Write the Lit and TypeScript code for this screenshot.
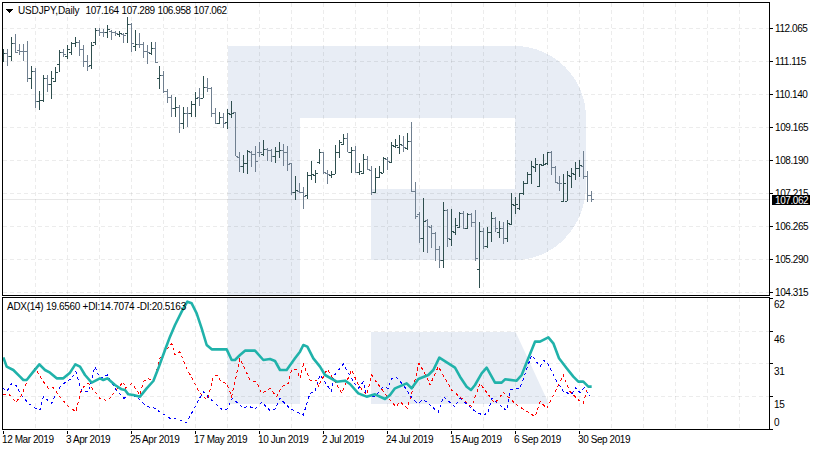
import { LitElement, html, svg, css } from "lit";
import { customElement } from "lit/decorators.js";

type Bar = [number, number, number, number];
// high, low, open, close, in page pixels; one bar every 4px from x = 3
const BARS: Bar[] = [
[49,62,54,53],[49,66,53,56],[37,61,56,43],[34,53,43,52],[44,55,50,51],[44,61,51,51],[41,82,51,78],[66,89,78,71],[68,108,71,101],[91,110,101,100],
[75,102,100,78],[75,92,78,84],[71,99,84,78],[67,82,81,72],[50,72,64,52],[49,57,52,54],[45,59,56,49],[42,55,52,43],[37,47,43,42],[40,56,42,49],
[45,67,49,61],[55,71,61,66],[42,69,65,45],[28,45,42,30],[28,36,30,32],[29,37,32,32],[25,38,32,29],[30,40,31,32],[31,36,32,33],[31,37,34,33],
[33,43,34,35],[17,43,33,24],[23,52,24,43],[30,51,46,44],[33,48,44,44],[42,58,44,51],[45,64,51,52],[42,55,53,48],[42,63,48,62],[66,89,78,75],
[71,93,75,91],[89,103,91,97],[95,117,97,108],[97,117,108,107],[105,133,107,123],[107,129,123,113],[107,127,113,113],[101,117,113,104],[92,117,104,98],[88,106,97,98],
[76,98,98,87],[78,92,87,88],[87,117,88,113],[108,124,113,123],[112,124,123,117],[113,128,117,123],[109,129,122,113],[101,118,114,113],[112,156,112,156],[152,172,157,166],
[155,173,166,163],[150,174,163,151],[151,167,152,154],[146,172,154,161],[142,157,152,152],[140,156,154,149],[148,161,149,150],[149,162,150,156],[147,163,156,151],[142,158,151,150],
[144,166,150,152],[146,171,152,164],[163,195,163,192],[176,200,192,190],[183,193,191,192],[187,209,192,196],[172,199,195,175],[161,180,175,174],[170,183,175,173],[149,164,162,152],
[152,174,152,172],[170,184,173,174],[171,178,175,174],[145,174,174,152],[140,158,152,142],[134,145,144,138],[133,152,138,152],[147,173,152,150],[146,173,150,172],[163,175,172,171],
[154,174,173,159],[156,170,159,169],[166,195,170,192],[168,193,192,177],[166,178,177,172],[157,173,173,158],[157,170,159,161],[142,163,162,145],[139,148,146,145],[135,154,147,144],
[136,152,145,147],[133,150,148,141],[122,192,141,191],[182,219,191,216],[212,243,214,238],[198,252,238,221],[219,253,220,226],[225,248,227,233],[232,261,233,249],[246,268,249,260],
[202,268,260,210],[209,247,210,238],[209,246,239,231],[218,235,232,225],[212,228,227,213],[211,229,213,228],[213,229,228,214],[213,227,214,222],[210,261,222,258],[222,288,269,231],
[228,249,231,246],[227,248,246,232],[212,242,232,218],[217,232,218,228],[221,238,232,228],[222,244,228,238],[220,242,238,223],[193,225,224,204],[197,214,205,204],[193,210,208,193],
[181,195,193,183],[172,184,183,174],[161,184,174,166],[158,172,167,164],[164,187,186,164],[154,166,165,164],[152,165,163,152],[151,175,152,167],[166,183,167,182],[176,191,183,183],
[174,202,201,183],[171,201,201,175],[168,188,176,173],[162,180,174,168],[160,177,168,165],[151,179,166,176],[171,202,176,195],[191,202,195,199],
];

// Line vertices read from three 3x crops: [x offset, y offset, points at 3x]
const fromCrops = (parts: [number, number[]][]) =>
  parts.flatMap(([ox, pts]) => {
    const out: string[] = [];
    for (let i = 0; i < pts.length; i += 2) out.push(`${ox + pts[i] / 3},${295 + pts[i + 1] / 3}`);
    return out;
  }).join(" ");

const ADX = fromCrops([
  [0, [10,187,20,215,40,225,60,245,70,255,80,255,100,230,118,208,135,225,150,233,170,250,190,250,210,233,226,208,240,215,255,240,275,263,300,250,310,255,322,250,345,270,365,283,375,285,385,298,400,300,420,305,440,280,460,258,475,220,495,165,510,125,525,90,545,50,562,20,575,25,590,55,605,100,620,150,635,163,680,163,695,195,705,195,720,180,735,167,765,167,790,195]],
  [270, [0,192,15,198,30,225,50,225,75,190,90,170,100,150,112,155,130,190,150,215,165,240,200,260,225,257,240,267,265,295,290,305,315,298,345,312,360,300,375,280,410,265,425,280,445,252,475,240,490,225,508,188,535,205,555,218,570,245,590,275,603,285,615,270,635,235,650,218,675,263,695,263,705,253,740,257,755,240,775,190,795,140]],
  [540, [0,140,25,127,40,145,57,190,80,220,100,245,115,260,130,260,145,275,155,275]],
]);
const PLUS = fromCrops([
  [0, [10,280,20,290,35,265,50,272,60,295,85,325,110,342,120,345,130,305,155,325,170,290,185,270,215,250,228,230,245,290,265,290,285,215,300,250,322,240,345,280,372,310,385,298,410,305,440,335,460,338,510,370,535,373,560,383,585,335,610,290,635,315,665,343,680,343,697,310,730,340,745,333,765,342,785,322]],
  [270, [0,347,15,343,30,310,60,340,100,360,120,295,135,290,150,240,185,290,190,245,220,207,250,260,265,280,280,260,290,305,315,305,340,275,355,280,365,250,380,247,400,270,430,315,445,325,460,313,505,352,520,305,555,335,570,310,610,345,640,362,655,350,665,310,710,347,720,285,750,280,785,180]],
  [540, [0,215,10,197,20,200,45,250,70,290,95,298,105,278,120,293,133,278,148,302]],
]);
const MINUS = fromCrops([
  [0, [10,300,25,295,47,322,65,300,85,250,105,220,130,260,145,280,160,278,175,300,205,335,228,350,245,280,265,265,300,310,322,318,345,290,370,260,375,280,395,265,420,300,430,260,445,250,460,260,480,190,515,145,525,180,540,170,560,220,600,295,622,315,640,245,650,240,665,262,680,265,695,305,720,190,750,255,770,262,785,295]],
  [270, [0,280,20,305,35,275,55,265,65,222,80,225,90,250,100,208,120,255,140,255,145,275,172,222,195,260,215,295,245,225,265,270,290,300,305,240,320,262,355,310,378,335,390,320,412,340,425,295,447,205,470,245,480,270,505,215,545,285,605,335,630,265,675,325,700,292,740,330,795,365]],
  [540, [0,320,20,340,30,322,50,280,70,240,90,290,115,315,130,325,140,285]],
]);

const GRID_X = Array.from({ length: 23 }, (_, i) => 35.5 + 32 * i);
const PRICE_ROWS: [number, string][] = [
  [28, "112.065"], [61, "111.115"], [94, "110.140"], [127, "109.165"], [160, "108.190"],
  [193, "107.215"], [226, "106.265"], [259, "105.290"], [292, "104.315"],
];
const ADX_ROWS: [number, string][] = [[308, "62"], [343, "46"], [375, "31"], [408, "15"], [426, "0"]];
const DATES: [number, string][] = [
  [2, "12 Mar 2019"], [66, "3 Apr 2019"], [130, "25 Apr 2019"], [194, "17 May 2019"], [258, "10 Jun 2019"],
  [322, "2 Jul 2019"], [386, "24 Jul 2019"], [450, "15 Aug 2019"], [514, "6 Sep 2019"], [578, "30 Sep 2019"],
];
const OHLC: [number, string][] = [[85.5, "107.164"], [121.5, "107.289"], [157.5, "106.958"], [193.5, "107.062"]];

const gridV = (y1: number, y2: number) =>
  GRID_X.map((x) => svg`<line class="grid" x1=${x} x2=${x} y1=${y1} y2=${y2}></line>`);
const gridH = (ys: number[]) =>
  ys.map((y) => svg`<line class="grid" x1="3" x2="769" y1=${y + 0.5} y2=${y + 0.5}></line>`);

const WATERMARK = svg`
  <path class="mark" d="M227.5 46H515A71 72 0 0 1 586 118V185A71 75 0 0 1 515 260H371V189H514.500V118H300V404H227.5Z"></path>
  <path class="mark" d="M371 332H515.600L549 404H371Z"></path>`;

@customElement("app-root")
export class AppRoot extends LitElement {
  static styles = css`
    :host { display: block; width: 815px; height: 450px; background: #fff; overflow: hidden; }
    .chart { display: flex; flex-direction: column; gap: 1px; padding: 2px 0 0 2px; }
    .row { display: flex; }
    .pane { display: block; box-sizing: border-box; width: 768px; border: 1px solid #000; flex: none; }
    .pane svg, .axis svg, .time svg { display: block; }
    .axis svg { overflow: visible; }
    .top { height: 294px; }
    .bottom { height: 133px; }
    .axis { width: 45px; flex: none; }
    .time { margin-left: -2px; height: 20px; }
    .grid { stroke: rgba(0,0,0,.075); stroke-width: 1; stroke-dasharray: 4 3; shape-rendering: crispEdges; }
    .priceline { stroke: rgba(0,0,0,.09); stroke-width: 1; shape-rendering: crispEdges; }
    .mark { fill: #e8edf5; }
    .up { fill: #2f4f4f; }
    .down { fill: #708090; }
    .adx { fill: none; stroke: #20b2aa; stroke-width: 2.6; stroke-linejoin: round; }
    .plus, .minus { fill: none; stroke-width: 1; stroke-dasharray: 3 3; shape-rendering: crispEdges; }
    .plus { stroke: #0000ff; }
    .minus { stroke: #ff0000; }
    text { font-family: "Liberation Sans", Arial, sans-serif; font-size: 10px; fill: #000; }
    .num { letter-spacing: -0.42px; }
    .name { letter-spacing: -0.15px; }
    .ind { letter-spacing: -0.28px; }
    .tick { stroke: #000; stroke-width: 1; shape-rendering: crispEdges; }
    .badge { fill: #000; }
    .badge-text { fill: #fff; letter-spacing: -0.42px; }
  `;

  private bars() {
    return BARS.map(([h, l, o, c], i) => {
      const x = 3 + 4 * i;
      const cls = c < o ? "up" : "down";
      return svg`<g class=${cls}>
        <rect x=${x} y=${h} width="1" height=${l - h}></rect>
        <rect x=${x - 2} y=${o} width="2" height="1"></rect>
        <rect x=${x + 1} y=${c} width="2" height="1"></rect>
      </g>`;
    });
  }

  render() {
    return html`<div class="chart">
      <div class="row">
        <div class="pane top">
          <svg width="766" height="292" viewBox="3 3 766 292" shape-rendering="crispEdges">
            ${WATERMARK}
            ${gridV(3, 295)}
            ${gridH(PRICE_ROWS.map((r) => r[0]))}
            <line class="priceline" x1="3" x2="769" y1="199.500" y2="199.500"></line>
            ${this.bars()}
            <polygon points="6,9 13,9 9.500,13"></polygon>
            <text class="name" x="18" y="14">USDJPY,Daily</text>
            ${OHLC.map(([x, t]) => svg`<text class="num" x=${x} y="14">${t}</text>`)}
          </svg>
        </div>
        <div class="axis">
          <svg width="45" height="294" viewBox="770 2 45 294">
            ${PRICE_ROWS.map(([y, t]) => svg`
              <line class="tick" x1="770" x2="773" y1=${y + 0.5} y2=${y + 0.5}></line>
              <text class="num" x="775" y=${y + 4}>${t}</text>`)}
            <rect class="badge" x="772" y="195" width="38" height="10"></rect>
            <text class="badge-text" x="775" y="204">107.062</text>
          </svg>
        </div>
      </div>
      <div class="row">
        <div class="pane bottom">
          <svg width="766" height="131" viewBox="3 298 766 131">
            ${WATERMARK}
            ${gridV(298, 429)}
            ${gridH([331, 363, 396])}
            <polyline class="plus" points=${PLUS}></polyline>
            <polyline class="minus" points=${MINUS}></polyline>
            <polyline class="adx" points=${ADX}></polyline>
            <text class="ind" x="7" y="310">ADX(14) 19.6560 +DI:14.7074 -DI:20.5163</text>
          </svg>
        </div>
        <div class="axis">
          <svg width="45" height="133" viewBox="770 297 45 133">
            ${[298, 331, 363, 396, 429].map((y) => svg`<line class="tick" x1="770" x2="773" y1=${y + 0.5} y2=${y + 0.5}></line>`)}
            ${ADX_ROWS.map(([y, t]) => svg`<text class="num" x="774" y=${y}>${t}</text>`)}
          </svg>
        </div>
      </div>
      <div class="time">
        <svg width="815" height="20" viewBox="0 430 815 20">
          ${DATES.map(([x, t]) => svg`
            <line class="tick" x1=${x + 1.5} x2=${x + 1.5} y1="430" y2="433"></line>
            <text class="num" x=${x} y="442">${t}</text>`)}
        </svg>
      </div>
    </div>`;
  }
}
